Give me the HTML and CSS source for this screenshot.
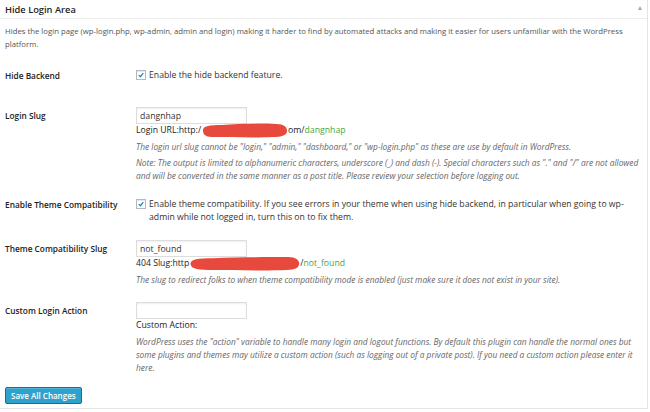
FILE: index.html
```html
<!doctype html>
<html>
  <head>
    <meta charset="UTF-8" />
    <title>Hide Login Area</title>
    <link rel="stylesheet" href="styles.css">
  </head>
  <body>
    <div class="postbox">
      <div class="hndle">
        <span>Hide Login Area</span>
        <span class="toggle"></span>
      </div>
      <div class="inside">
        <p class="intro">Hides the login page (wp-login.php, wp-admin, admin and login) making it harder to find by automated attacks and making it easier for users unfamiliar with the WordPress platform.</p>

        <div class="form-table">
          <div class="row row-backend">
            <div class="label">Hide Backend</div>
            <div class="field">
              <label class="check"><span class="box"><svg viewBox="0 0 10 10"><path d="M2.2 5.2 L4.2 7.2 L7.9 2.6" /></svg></span>Enable the hide backend feature.</label>
            </div>
          </div>

          <div class="row">
            <div class="label label-input">Login Slug</div>
            <div class="field">
              <input class="text" type="text" value="dangnhap">
              <div class="url">Login URL:http:/<span class="blob blob-login"><svg viewBox="0 0 90 15" preserveAspectRatio="none"><path d="M3 7 C3 3 10 2 22 2 C40 1 60 0 78 1 C86 1 89 4 89 8 C89 12 84 14 74 14 C55 15 30 14 12 14 C5 14 3 11 3 7 Z" /></svg></span>om/<span class="slug">dangnhap</span></div>
              <p class="desc">The login url slug cannot be "login," "admin," "dashboard," or "wp-login.php" as these are use by default in WordPress.</p>
              <p class="desc">Note: The output is limited to alphanumeric characters, underscore (_) and dash (-). Special characters such as "." and "/" are not allowed and will be converted in the same manner as a post title. Please review your selection before logging out.</p>
            </div>
          </div>

          <div class="row">
            <div class="label">Enable Theme Compatibility</div>
            <div class="field">
              <label class="check"><span class="box"><svg viewBox="0 0 10 10"><path d="M2.2 5.2 L4.2 7.2 L7.9 2.6" /></svg></span>Enable theme compatibility. If you see errors in your theme when using hide backend, in particular when going to wp-admin while not logged in, turn this on to fix them.</label>
            </div>
          </div>

          <div class="row">
            <div class="label label-input">Theme Compatibility Slug</div>
            <div class="field">
              <input class="text" type="text" value="not_found">
              <div class="url">404 Slug:http<span class="blob blob-slug"><svg viewBox="0 0 134 14" preserveAspectRatio="none"><path d="M3 7 C3 3 12 2 30 2 C60 1 95 1 120 1 C129 1 133 4 133 7 C133 11 128 13 118 13 C90 14 55 13 25 13 C8 13 3 11 3 7 Z" /></svg></span>/<span class="slug">not_found</span></div>
              <p class="desc">The slug to redirect folks to when theme compatibility mode is enabled (just make sure it does not exist in your site).</p>
            </div>
          </div>

          <div class="row">
            <div class="label label-input">Custom Login Action</div>
            <div class="field">
              <input class="text" type="text" value="">
              <div class="url">Custom Action:</div>
              <p class="desc">WordPress uses the "action" variable to handle many login and logout functions. By default this plugin can handle the normal ones but some plugins and themes may utilize a custom action (such as logging out of a private post). If you need a custom action please enter it here.</p>
            </div>
          </div>
        </div>

        <div class="submit">
          <button class="button-primary" type="button">Save All Changes</button>
        </div>
      </div>
    </div>
  </body>
</html>
```

FILE: styles.css
```css
html,
body {
  margin: 0;
  background-color: #fff;
}
body {
  font-family: "Open Sans", "Liberation Sans", sans-serif;
  font-size: 8.7px;
  line-height: 13px;
  color: #444;
}
.postbox {
  width: 648px;
  height: 409px;
  border-right: 1px solid #e5e5e5;
  border-bottom: 1px solid #e5e5e5;
  box-sizing: border-box;
}
.hndle {
  display: flex;
  justify-content: space-between;
  align-items: center;
  height: 18px;
  padding: 0 5px;
  border-bottom: 1px solid #eee;
  font-size: 9.3px;
  font-weight: 600;
  color: #222;
}
.hndle .toggle {
  width: 0;
  height: 0;
  margin-top: -3px;
  border-left: 2.5px solid transparent;
  border-right: 2.5px solid transparent;
  border-bottom: 4px solid #aaa;
}
.inside {
  padding: 6px 6px 0 5px;
}
.intro {
  margin: 0 2px 0 0;
  font-size: 7.75px;
  color: #555;
}
.form-table {
  display: flex;
  flex-direction: column;
}
.row {
  display: grid;
  grid-template-columns: 131px 1fr;
  padding: 8px 0;
}
.row-backend {
  padding: 18px 0 17px;
}
.label {
  font-size: 8.3px;
  font-weight: 600;
  color: #222;
}
.label-input {
  padding-top: 2px;
}
.field {
  min-width: 0;
}
.check {
  display: block;
  position: relative;
  margin-right: 12px;
  padding-left: 13px;
  color: #333;
}
.check .box {
  position: absolute;
  left: 0;
  top: 1px;
  width: 10px;
  height: 10px;
  box-sizing: border-box;
  border: 1px solid #b4b9be;
  background: #fff;
  box-shadow: inset 0 1px 1px rgba(0, 0, 0, 0.1);
}
.check .box svg {
  display: block;
  width: 8px;
  height: 8px;
  fill: none;
  stroke: #1e8cbe;
  stroke-width: 1.6;
}
.text {
  display: block;
  width: 111px;
  height: 17px;
  box-sizing: border-box;
  margin: 0;
  padding: 0 3px;
  border: 1px solid #ddd;
  box-shadow: inset 0 1px 2px rgba(0, 0, 0, 0.07);
  font-family: inherit;
  font-size: 8.7px;
  color: #333;
  outline: none;
}
.url {
  color: #222;
  white-space: nowrap;
}
.slug {
  color: #45a845;
}
.blob {
  display: inline-block;
  position: relative;
  vertical-align: top;
  height: 13px;
}
.blob svg {
  position: absolute;
  left: 0;
  top: -1px;
  width: 100%;
  height: 15px;
  fill: #e8493d;
}
.blob-login {
  width: 88px;
  margin-left: -1px;
  margin-right: 0;
}
.blob-slug {
  width: 112px;
  margin-left: -1px;
  margin-right: 0;
}
.desc {
  margin: 3px 0 0;
  font-size: 8.35px;
  font-style: italic;
  color: #666;
}
.submit {
  padding-top: 5px;
}
.button-primary {
  height: 17px;
  padding: 0 5px;
  border: 1px solid #0074a2;
  border-radius: 2px;
  background: #2ea2cc;
  box-shadow: inset 0 1px 0 rgba(120, 200, 230, 0.5);
  font-family: inherit;
  font-size: 8px;
  font-weight: 600;
  color: #fff;
}
```
